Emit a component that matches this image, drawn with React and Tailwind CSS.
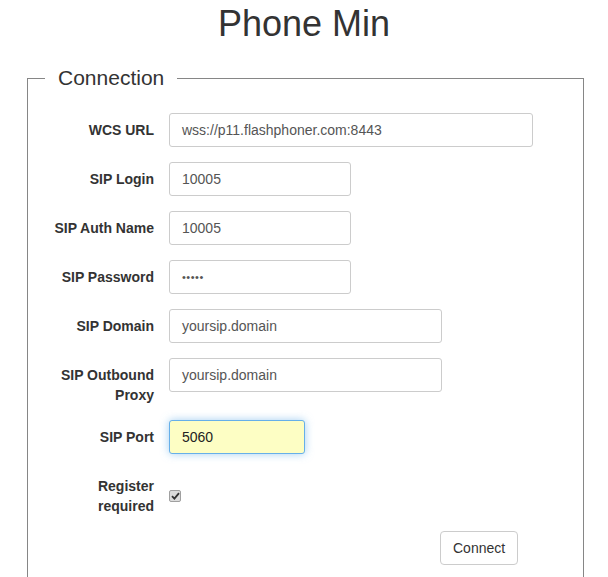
const font = { fontFamily: '"Liberation Sans", Arial, sans-serif' };

const fields = [
  { label: "WCS URL", value: "wss://p11.flashphoner.com:8443", width: "w-[364px]" },
  { label: "SIP Login", value: "10005", width: "w-[182px]" },
  { label: "SIP Auth Name", value: "10005", width: "w-[182px]" },
  { label: "SIP Password", value: "•••••", width: "w-[182px]", password: true },
  { label: "SIP Domain", value: "yoursip.domain", width: "w-[273px]" },
  { label: "SIP Outbound Proxy", value: "yoursip.domain", width: "w-[273px]" },
];

function Row({ label, children }) {
  return (
    <div className="mb-[15px] flex items-start gap-[15px]">
      <label className="w-[108px] shrink-0 pt-[7px] text-right text-sm font-bold leading-5 text-[#333]">
        {label}
      </label>
      {children}
    </div>
  );
}

export default function App() {
  return (
    <div className="h-[577px] overflow-hidden bg-white" style={font}>
      <h1 className="mt-[4px] text-center text-[36px] leading-[40px] text-[#333]">Phone Min</h1>

      <fieldset className="ml-[27px] mt-[22px] w-[557px] border border-[#868686] pb-[80px] pl-[18px]">
        <legend className="ml-[-1px] px-[13px] text-[21px] leading-[24px] text-[#333]">Connection</legend>

        <div className="pt-[23px]">
          {fields.map((f) => (
            <Row key={f.label} label={f.label}>
              <div
                className={`${f.width} h-[34px] rounded-[3px] border border-[#ccc] bg-white px-3 py-[6px] text-sm leading-5 text-[#555] ${f.password ? "text-[11px] tracking-[0.5px]" : ""}`}
              >
                {f.value}
              </div>
            </Row>
          ))}

          <Row label="SIP Port">
            <div className="h-[34px] w-[136px] rounded-[3px] border border-[#66afe9] bg-[#fdfec4] px-3 py-[6px] text-sm leading-5 text-[#222] shadow-[0_0_8px_rgba(102,175,233,0.6)]">
              5060
            </div>
          </Row>

          <Row label="Register required">
            <div className="mt-[21px] flex h-[12px] w-[12px] items-center justify-center rounded-[2px] border border-[#a0a0a0] bg-[#dcdcdc]">
              <svg width="9" height="8" viewBox="0 0 9 8">
                <path d="M1 4.2 L3.4 6.6 L8 1.2" fill="none" stroke="#333" strokeWidth="1.8" />
              </svg>
            </div>
          </Row>

          <div className="ml-[394px] mt-[8px]">
            <button
              type="button"
              className="h-[34px] rounded-[4px] border border-[#ccc] bg-white px-3 text-sm leading-5 text-[#333]"
            >
              Connect
            </button>
          </div>
        </div>
      </fieldset>
    </div>
  );
}
